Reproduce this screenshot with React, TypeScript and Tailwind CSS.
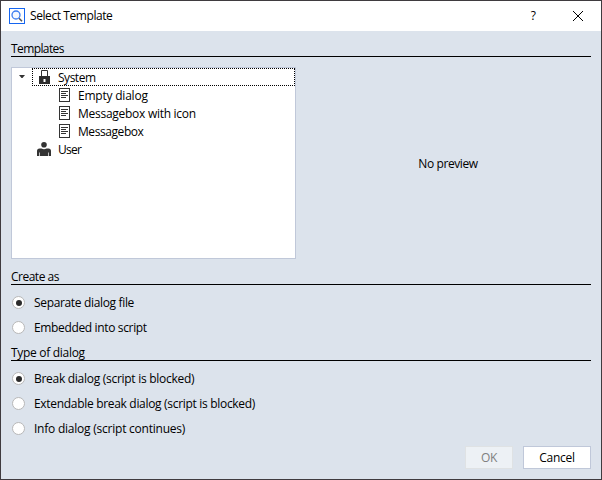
import type { ReactNode } from "react";

function SearchLogo() {
  return (
    <svg width="16" height="16" viewBox="0 0 16 16" className="shrink-0">
      <rect x="0.5" y="0.5" width="15" height="15" fill="#fff" stroke="#1565f0" />
      <path d="M10 10.2l3 3" stroke="#555" strokeWidth="1.6" />
      <circle cx="7" cy="7" r="4" fill="#f4f8ff" stroke="#3b7cf0" strokeWidth="1.3" />
    </svg>
  );
}

function LockIcon() {
  return (
    <svg width="16" height="16" viewBox="0 0 16 16" className="shrink-0">
      <path d="M5.500 8V1.500h6V8" fill="none" stroke="#333" />
      <path d="M3 7h11v8H3zM7.500 10v3h2v-3z" fill="#2d2d2d" fillRule="evenodd" />
    </svg>
  );
}

function DocIcon() {
  return (
    <svg width="16" height="16" viewBox="0 0 16 16" className="shrink-0">
      <rect x="3.5" y="1.5" width="10" height="13" fill="#fff" stroke="#333" />
      <path d="M5 4.5h7M5 6.5h5M5 8.5h7M5 10.5h5" stroke="#333" />
    </svg>
  );
}

function UserIcon() {
  return (
    <svg width="16" height="16" viewBox="0 0 16 16" className="shrink-0">
      <circle cx="8" cy="3.8" r="2.8" fill="#333" />
      <path d="M1 15v-5q0-2.500 2.500-2.500h2q2.500 1.500 5 0h2q2.500 0 2.500 2.500v5h-2v-3.500h-.7V15H3.700v-3.500H3V15z" fill="#333" />
    </svg>
  );
}

function Section({ children, height }: { children: ReactNode; height: string }) {
  return <div className={`flex items-end border-b border-black ${height}`}>{children}</div>;
}

function Radio({ checked, children }: { checked?: boolean; children: ReactNode }) {
  return (
    <label className="flex h-[25px] items-center gap-[9px] pl-px">
      <span className="flex size-[13px] shrink-0 items-center justify-center rounded-full border border-[#b8b8b8] bg-white">
        {checked && <span className="size-[6px] rounded-full bg-[#2b2b2b]" />}
      </span>
      {children}
    </label>
  );
}

function T({ children, className = "" }: { children: string; className?: string }) {
  return <span className={`whitespace-nowrap ${className}`}>{children}</span>;
}

export default function App() {
  return (
    <div className="flex h-[480px] w-[602px] flex-col border border-[#3f3b3f] bg-[#dce3ec] font-['Open_Sans','Noto_Sans',sans-serif] text-[12px] leading-4 text-black">
      <header className="flex h-[30px] items-center bg-white pl-2">
        <SearchLogo />
        <T className="ml-[5px] tracking-[-0.42px]">Select Template</T>
        <T className="ml-auto mr-[37px] font-medium">?</T>
        <svg width="10" height="10" viewBox="0 0 10 10" className="mr-[18px]">
          <path d="M0 0l10 10M10 0L0 10" stroke="#000" />
        </svg>
      </header>
      <main className="flex flex-1 flex-col px-2.5">
        <Section height="h-[26px]"><T className="-mb-px tracking-[-0.6px]">Templates</T></Section>
        <div className="mt-2.5 flex h-[192px]">
          <div className="w-[285px] border border-[#c0c8d9] bg-white">
            <div className="flex h-[18px]">
              <div className="flex w-5 justify-center pt-[7px]">
                <svg width="6" height="3" viewBox="0 0 6 3"><path d="M0 0h6L3.500 3h-1z" fill="#333" /></svg>
              </div>
              <div className="flex w-[263px] items-center gap-[6px] border border-dotted border-black pl-[3px]">
                <LockIcon /><T className="pt-0.5 tracking-[-0.48px]">System</T>
              </div>
            </div>
            <div className="flex h-[18px] items-center gap-[6px] pl-11"><DocIcon /><T className="pt-0.5 tracking-[-0.22px]">Empty dialog</T></div>
            <div className="flex h-[18px] items-center gap-[6px] pl-11"><DocIcon /><T className="pt-0.5 tracking-[-0.27px]">Messagebox with icon</T></div>
            <div className="flex h-[18px] items-center gap-[6px] pl-11"><DocIcon /><T className="pt-0.5 tracking-[-0.43px]">Messagebox</T></div>
            <div className="flex h-[18px] items-center gap-[6px] pl-6"><UserIcon /><T className="pt-0.5 tracking-[-0.7px]">User</T></div>
          </div>
          <div className="flex flex-1 items-center justify-center pl-[9px]"><T className="pt-0.5 tracking-[-0.4px]">No preview</T></div>
        </div>
        <Section height="h-[26px]"><T className="-mb-px tracking-[-0.5px]">Create as</T></Section>
        <div className="pt-[5px]">
          <Radio checked><T className="tracking-[-0.34px]">Separate dialog file</T></Radio>
          <Radio><T className="tracking-[-0.35px]">Embedded into script</T></Radio>
        </div>
        <Section height="h-[21px]"><T className="-mb-px tracking-[-0.3px]">Type of dialog</T></Section>
        <div className="pt-[5px]">
          <Radio checked><T className="tracking-[-0.28px]">Break dialog (script is blocked)</T></Radio>
          <Radio><T className="tracking-[-0.31px]">Extendable break dialog (script is blocked)</T></Radio>
          <Radio><T className="tracking-[-0.23px]">Info dialog (script continues)</T></Radio>
        </div>
        <footer className="mt-[5px] flex justify-end gap-2.5">
          <button className="h-[23px] w-12 border border-[#dfe2e4] bg-[#edf1f5] text-[#808080]"><T className="tracking-[-0.3px]">OK</T></button>
          <button className="h-[23px] w-[68px] border border-[#c0c8d9] bg-white"><T className="tracking-[-0.3px]">Cancel</T></button>
        </footer>
      </main>
    </div>
  );
}
